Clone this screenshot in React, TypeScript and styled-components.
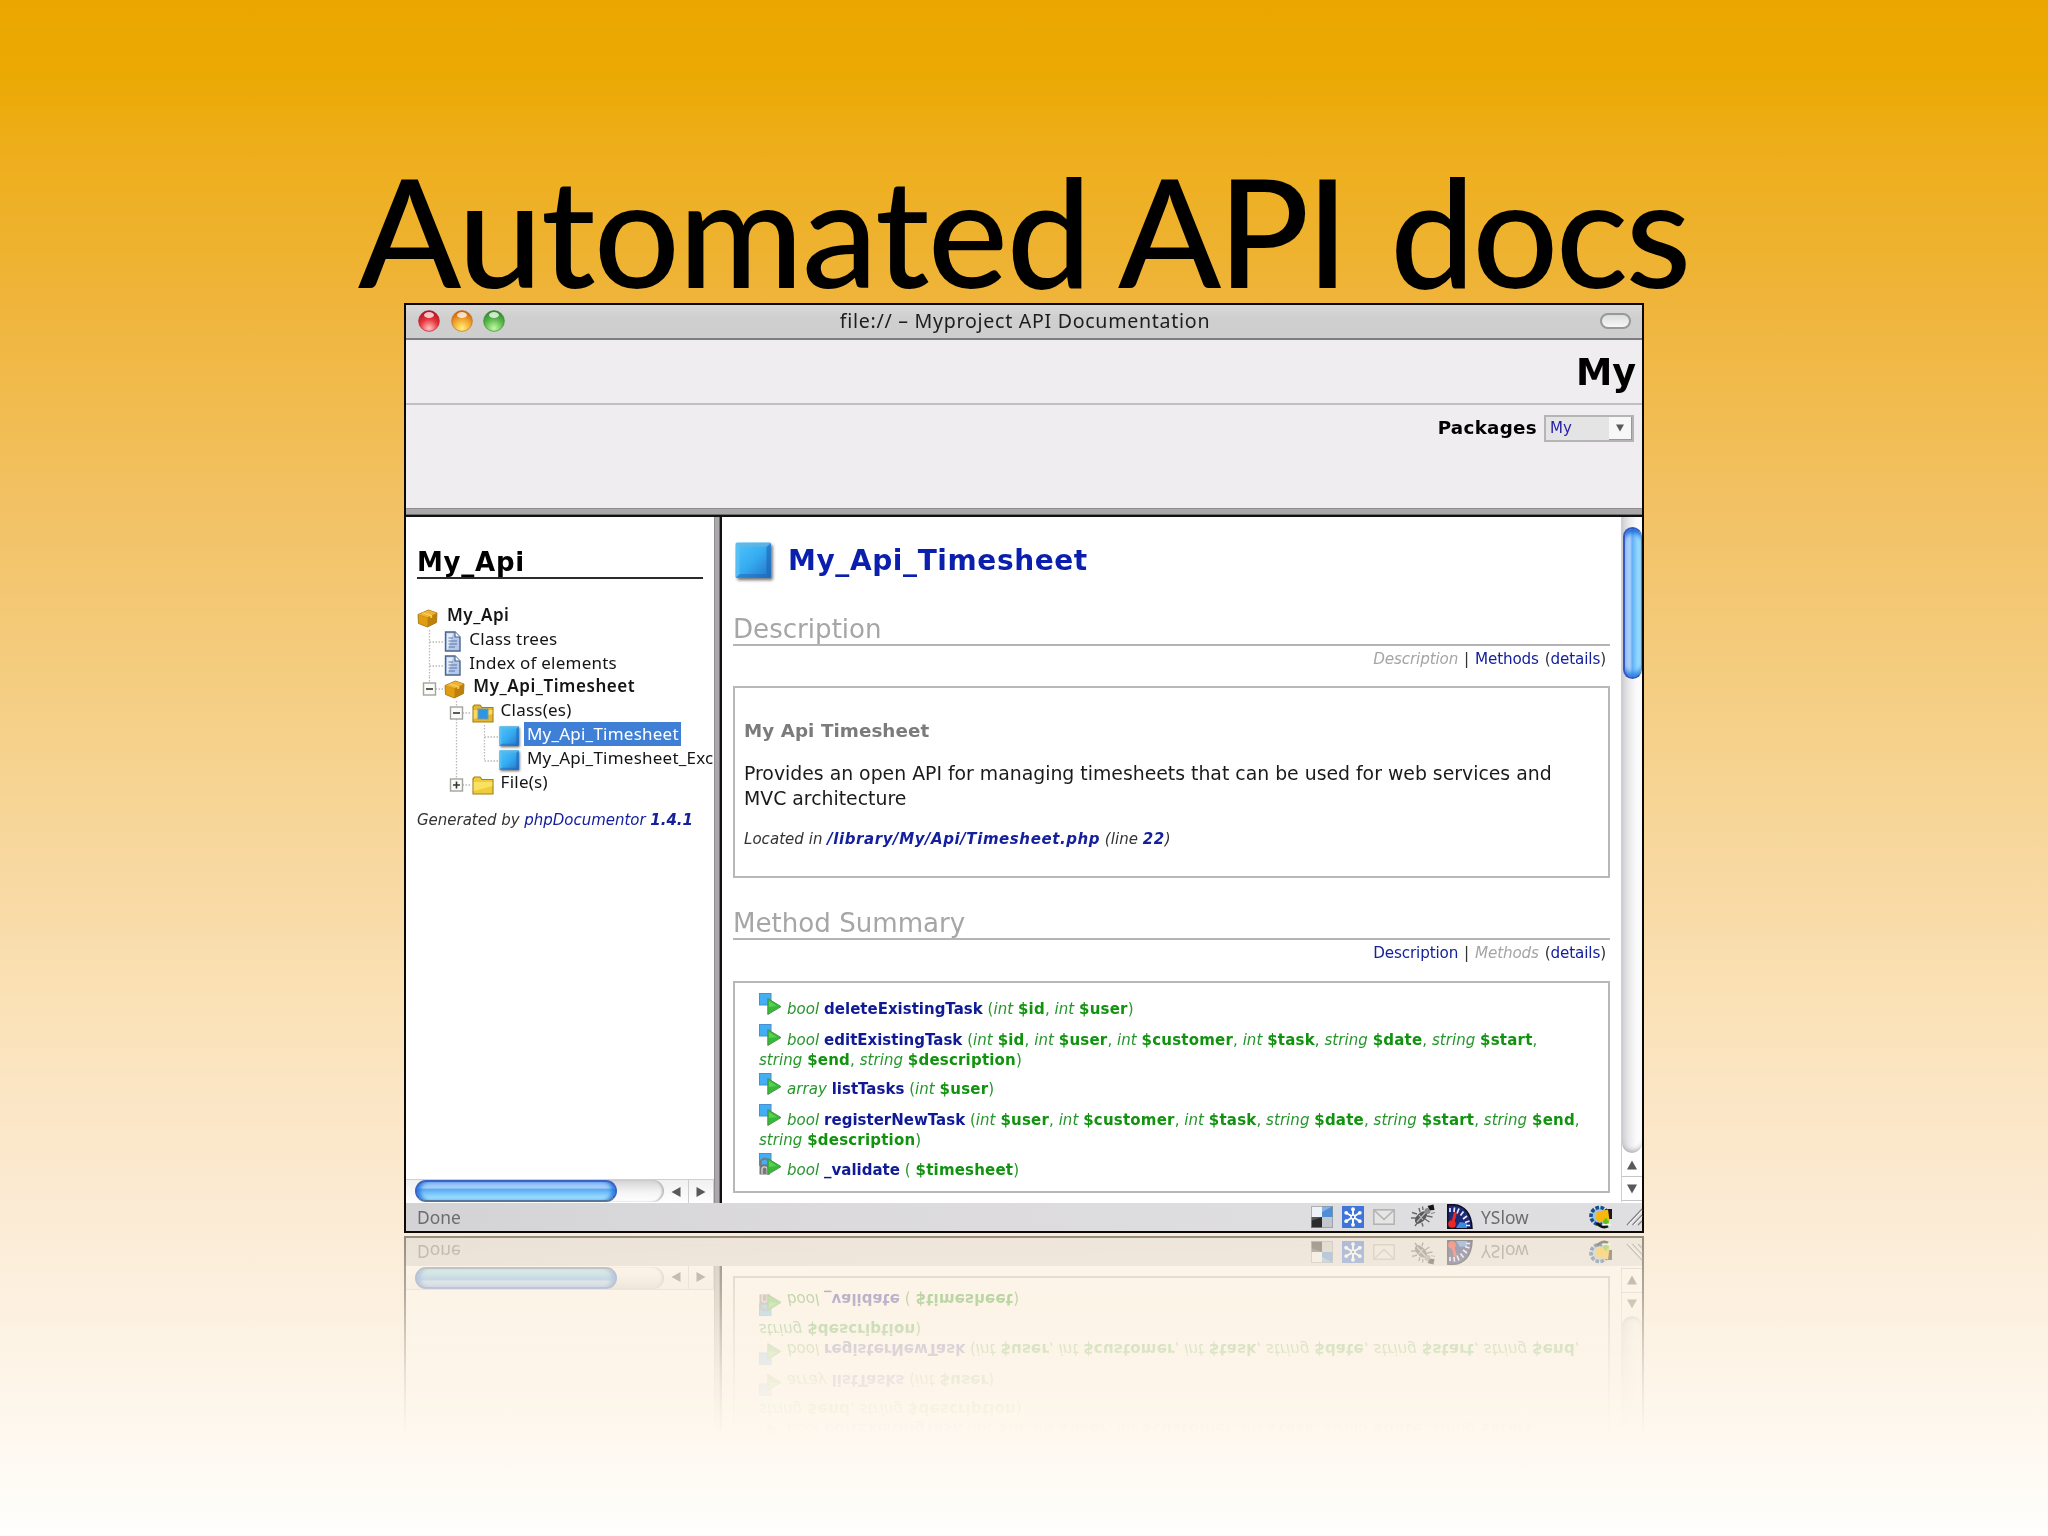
import React from "react";
import styled, { createGlobalStyle } from "styled-components";

const verdana = "'DejaVu Sans', Verdana, sans-serif";
const lucida = "'Noto Sans', 'Lucida Grande', sans-serif";
const gill = "Lato, 'Gill Sans', sans-serif";

const GlobalStyle = createGlobalStyle`
  *, *::before, *::after { box-sizing: border-box; }
  html, body { margin: 0; padding: 0; }
  svg { display: block; flex: none; overflow: visible; }
`;

/* ---------- slide ---------- */

const Slide = styled.main`
  display: flex;
  flex-direction: column;
  width: 2048px;
  height: 1536px;
  overflow: hidden;
  padding: 153px 0 0 358px;
  background: linear-gradient(
    #eba700 0px, #eba903 75px, #eeae1b 150px, #efb43a 300px, #f1bb4e 400px,
    #f2c163 500px, #f4cb7c 650px, #f6d595 800px, #f8daa5 900px, #fae1b6 1000px,
    #fbe7c9 1130px, #fbedd9 1250px, #fdf3e5 1350px, #fef9f1 1450px, #fffefc 1536px
  );
`;

const Title = styled.h1`
  display: grid;
  grid-template-columns: 760px 272px 300px;
  margin: 0;
  height: 150px;
  font: 500 151.5px/153px ${gill};
  color: #000;
`;

const Word = styled.span<{ $tracking: number }>`
  letter-spacing: ${(p) => p.$tracking}px;
  white-space: nowrap;
`;

/* ---------- browser window ---------- */

const Window = styled.section`
  display: flex;
  flex-direction: column;
  flex: none;
  width: 1240px;
  height: 930px;
  margin-left: 46px;
  border: 2px solid #0b0806;
  background: #fff;
  -webkit-box-reflect: below 3px linear-gradient(to top, rgba(0, 0, 0, 0.42), rgba(0, 0, 0, 0.3) 6%, rgba(0, 0, 0, 0.17) 11%, rgba(0, 0, 0, 0.07) 15.5%, transparent 21.5%);
`;

const TitleBar = styled.header`
  display: flex;
  align-items: center;
  flex: none;
  height: 35px;
  padding: 0 11px 0 12px;
  border-bottom: 2px solid #7d7f7e;
  background: linear-gradient(#d9d9d9, #cfcfcf 40%, #cdcecd);
`;

const Lights = styled.div`
  display: flex;
  gap: 10.7px;
  width: 120px;
  margin-top: -1px;
`;

const WindowTitle = styled.div`
  flex: 1;
  height: 33px;
  padding-left: 1px;
  text-align: center;
  font: 400 19.6px/32px ${lucida};
  letter-spacing: 0.71px;
  color: #1d1d1d;
  white-space: nowrap;
`;

const PillSlot = styled.div`
  display: flex;
  justify-content: flex-end;
  width: 120px;
`;

const Pill = styled.div`
  width: 31px;
  height: 16px;
  margin-top: -1px;
  border: 2px solid #979999;
  border-radius: 8px;
  background: linear-gradient(#dcdcdc, #f7f7f7);
`;

const Banner = styled.div`
  flex: none;
  height: 65px;
  padding: 9px 6px 0 0;
  border-bottom: 2px solid #c2c1c2;
  background: #efedef;
  text-align: right;
  font: 700 36.5px/48px ${verdana};
  color: #000;
`;

const PackageBar = styled.div`
  display: flex;
  justify-content: flex-end;
  align-items: flex-start;
  gap: 7px;
  flex: none;
  height: 103px;
  padding: 10px 8px 0 0;
  background: #efedef;
`;

const PackageLabel = styled.label`
  font: 700 18.3px/25px ${verdana};
  letter-spacing: 0.3px;
  color: #000;
`;

const Select = styled.div`
  display: flex;
  justify-content: space-between;
  width: 90px;
  height: 27px;
  border: 2px solid #b5b5b5;
  background: #e4e4e5;
  font: 400 15px/23px ${verdana};
  color: #2a22a8;
  padding-left: 4px;
`;

const SelectArrow = styled.span`
  display: flex;
  align-items: center;
  justify-content: center;
  width: 23px;
  background: #f7f7f7;
  border-right: 1px solid #999;
  border-bottom: 1px solid #999;
`;

const HSplitter = styled.div`
  flex: none;
  height: 9px;
  background: linear-gradient(#8f8d8f 0 1px, #aaa8aa 1px 6px, #6e6d6e 6px 7px, #111 7px);
`;

const Frames = styled.div`
  display: flex;
  flex: none;
  height: 686px;
`;

const VSplitter = styled.div`
  flex: none;
  width: 8px;
  background: linear-gradient(90deg, #8f8d8f 0 1px, #aaa8aa 1px 5px, #6e6d6e 5px 6px, #111 6px);
`;

/* ---------- navigation frame ---------- */

const NavFrame = styled.nav`
  display: flex;
  flex-direction: column;
  flex: none;
  width: 308px;
`;

const NavBody = styled.div`
  flex: 1;
  overflow: hidden;
  padding: 30px 0 0 11px;
`;

const NavHeading = styled.h2`
  width: 286px;
  height: 32px;
  margin: 0 0 27px;
  border-bottom: 2px solid #2b2b2b;
  font: 700 26px/30px ${verdana};
  letter-spacing: 0.75px;
  color: #000;
`;

const TreeRow = styled.div`
  display: flex;
  align-items: flex-start;
  height: 23.8px;
`;

const IconSlot = styled.span<{ $width: number; $top?: number }>`
  flex: none;
  width: ${(p) => p.$width}px;
  padding-top: ${(p) => p.$top ?? 1}px;
`;

const TreeLabel = styled.span<{ $bold?: boolean; $selected?: boolean }>`
  flex: none;
  height: 24px;
  margin-top: -3px;
  padding: 0 2px 0 3px;
  font: ${(p) => (p.$bold ? 600 : 400)} 17px/24px ${lucida};
  letter-spacing: ${(p) => (p.$bold ? 0.55 : 0.23)}px;
  color: ${(p) => (p.$selected ? "#fff" : "#141414")};
  background: ${(p) => (p.$selected ? "#3f7fd6" : "transparent")};
  white-space: nowrap;
`;

const Generated = styled.p`
  margin: 13.5px 0 0;
  font: italic 400 15px/20px ${verdana};
  letter-spacing: -0.02px;
  color: #333;
  white-space: nowrap;
`;

const Link = styled.span<{ $bold?: boolean }>`
  color: #15209c;
  font-weight: ${(p) => (p.$bold ? 700 : "inherit")};
`;

const HScroll = styled.div`
  display: flex;
  align-items: flex-start;
  flex: none;
  height: 24px;
  padding-left: 9px;
  border-top: 1px solid #cfcfcf;
  background: linear-gradient(#f0f0f0, #fff);
`;

const HTrack = styled.div`
  width: 249px;
  height: 22px;
  border-radius: 11px;
  background: linear-gradient(#d3d3d5, #f4f4f5 55%, #fff);
  box-shadow: inset -2px 0 2px #bcbcc0;
`;

const HThumb = styled.div`
  width: 202px;
  height: 22px;
  border: 2px solid #3b62c4;
  border-bottom-color: #55779c;
  border-radius: 11px;
  background: linear-gradient(#8ebcf4, #a5cef8 32%, #5aaaf3 42%, #86cefb 72%, #a9e9fe);
  box-shadow: inset 5px 0 4px -2px #2279e0, inset -5px 0 4px -2px #2279e0;
`;

const HArrow = styled.span`
  display: flex;
  align-items: center;
  justify-content: center;
  width: 25px;
  height: 23px;
  border-right: 1px solid #cdcdcf;
`;

/* ---------- documentation frame ---------- */

const DocFrame = styled.article`
  display: flex;
  flex-direction: column;
  flex: none;
  width: 899px;
  padding: 25px 11px 0;
`;

const ClassHeading = styled.h1`
  display: flex;
  align-items: center;
  gap: 15px;
  height: 38px;
  margin: 0 0 33px;
  padding-left: 2px;
  font: 700 28px/38px ${verdana};
  letter-spacing: 0.6px;
  color: #0a1fae;
`;

const SectionHeading = styled.h2`
  height: 33px;
  margin: 0 0 3px;
  border-bottom: 2px solid #b5b3b7;
  font: 400 26.1px/32px ${verdana};
  color: #a6a6a6;
`;

const SectionNav = styled.div`
  height: 20px;
  padding-right: 4px;
  text-align: right;
  font: 400 15.2px/20px ${verdana};
  letter-spacing: -0.14px;
  word-spacing: 1.2px;
  color: #333;
  white-space: nowrap;
`;

const Current = styled.em`
  color: #a5a5a5;
`;

const Box = styled.div<{ $height: number; $gap: number; $pad: string }>`
  height: ${(p) => p.$height}px;
  margin: ${(p) => p.$gap}px 0 29px;
  padding: ${(p) => p.$pad};
  border: 2px solid #b9b7bb;
  flex: none;
`;

const BoxTitle = styled.h3`
  margin: 0 0 18px;
  font: 700 18.3px/24px ${verdana};
  letter-spacing: 0.08px;
  color: #7b7b7b;
`;

const Paragraph = styled.p`
  width: 830px;
  margin: 0 0 18px;
  font: 400 18.85px/25px ${verdana};
  color: #1a1a1a;
`;

const Location = styled.p`
  margin: 0;
  font: italic 400 15px/20px ${verdana};
  letter-spacing: 0.04px;
  color: #333;
  b { letter-spacing: 0.58px; }
`;

const Method = styled.div<{ $gap: number }>`
  margin-bottom: ${(p) => p.$gap}px;
  font: 400 15px/20px ${verdana};
  letter-spacing: 0.05px;
  color: #25962b;
  b { color: #11930f; letter-spacing: 0.2px; }
`;

const MethodName = styled.strong`
  color: #101a96;
  letter-spacing: 0;
`;

const Line = styled.div`
  display: flex;
  height: 20px;
  white-space: pre;
`;

const MethodIconSlot = styled.span`
  width: 28px;
  margin-top: -6.5px;
`;

const VScroll = styled.div`
  display: flex;
  flex-direction: column;
  flex: none;
  width: 21px;
  height: 685px;
  border-left: 1px solid #cfcfd2;
  background: #fff;
`;

const VTrack = styled.div`
  height: 636px;
  padding: 10px 0 0 1px;
  border-radius: 0 0 10px 10px;
  background: linear-gradient(90deg, #cfcfd3, #e9e9eb 35%, #fafafb 70%, #fff);
  box-shadow: inset 0 -5px 5px -3px #a9a9ac;
`;

const VThumb = styled.div`
  width: 19px;
  height: 152px;
  border: 2px solid #3458bf;
  border-right: 1px solid #5583b0;
  border-radius: 10px;
  background: linear-gradient(90deg, #a3c8f7, #a9cffa 32%, #61aef5 45%, #8dd3fc 75%, #a3e4fd);
  box-shadow: inset 0 7px 5px -3px #1d6ddc, inset 0 -7px 5px -3px #2b80e4;
`;

const VArrow = styled.span`
  display: flex;
  align-items: center;
  justify-content: center;
  height: 24px;
  border-bottom: 1px solid #c6c6c8;
`;

/* ---------- status bar ---------- */

const StatusBar = styled.footer`
  display: flex;
  align-items: center;
  flex: none;
  height: 28px;
  padding: 0 0 1px 11px;
  background: linear-gradient(90deg, #d3d3d5, #dcdadd 35%, #dfdfe1);
  font: 400 17.4px/28px ${lucida};
  color: #6c6c6e;
`;

const StatusText = styled.span<{ $width: number }>`
  width: ${(p) => p.$width}px;
  margin-top: 1px;
`;

const StatusIcon = styled.span<{ $width: number }>`
  width: ${(p) => p.$width}px;
`;

/* ---------- drawings ---------- */

const Light = ({ id, dark, mid, glow }: { id: string; dark: string; mid: string; glow: string }) => (
  <svg width="22" height="22" viewBox="0 0 22 22">
    <defs>
      <radialGradient id={id} cx="0.5" cy="0.85" r="0.8">
        <stop offset="0" stopColor={glow} />
        <stop offset="0.55" stopColor={mid} />
        <stop offset="1" stopColor={dark} />
      </radialGradient>
    </defs>
    <circle cx="11" cy="11" r="10.4" fill={`url(#${id})`} stroke={dark} strokeOpacity="0.6" />
    <ellipse cx="11" cy="5" rx="5" ry="3" fill="#fff" fillOpacity="0.75" />
  </svg>
);

const Triangle = ({ dir, size = 10 }: { dir: "up" | "down" | "left" | "right"; size?: number }) => {
  const d = {
    up: "M5 0.5L10 9.5H0Z",
    down: "M5 9.5L0 0.5H10Z",
    left: "M0.5 5L9.5 0V10Z",
    right: "M9.5 5L0.5 0V10Z",
  }[dir];
  return (
    <svg width={size} height={size} viewBox="0 0 10 10">
      <path d={d} fill="#59595b" />
    </svg>
  );
};

const PackageIcon = () => (
  <svg width="21" height="19" viewBox="0 0 21 19">
    <path d="M1 5.5L11.5 1L20 4L19.5 13.5L10.5 18L1.5 14.5Z" fill="#d08c0c" stroke="#9a690c" strokeWidth="0.8" strokeLinejoin="round" />
    <path d="M1.5 5.5L11.5 1.3L19.6 4L10.5 8.3Z" fill="#efb32f" />
    <path d="M1.6 6L10.4 8.7V17.4L2 14.2Z" fill="#e09d12" />
    <path d="M10.9 8.7L19.4 4.6L19 13.2L10.9 17.3Z" fill="#bd800c" />
    <path d="M6.5 3.4L15.2 6.2V8.4L13.4 9.2V7.2L5 4.2Z" fill="#f9cf60" />
  </svg>
);

const PageIcon = () => (
  <svg width="18" height="21" viewBox="0 0 18 21">
    <path d="M1.5 1H11L16 6V20H1.5Z" fill="#b4c9ea" stroke="#4c648f" strokeWidth="1.4" />
    <path d="M3 2.5H9L4 18.5H3Z" fill="#e3edfa" />
    <path d="M11 1V6H16" fill="#f4f8ff" stroke="#4c648f" strokeWidth="1.2" />
    <path d="M4.5 7H9M4.5 10H13M4.5 13H13M4.5 16H11" stroke="#5c78a8" strokeWidth="1.2" />
  </svg>
);

const FolderIcon = ({ classes = false }: { classes?: boolean }) => (
  <svg width="22" height="19" viewBox="0 0 22 19">
    <path d="M1 18V2.5L2.5 1H8L10 3.5H21V18Z" fill={classes ? "#e6b72c" : "#f0cd38"} stroke="#a37f16" strokeWidth="1.1" />
    <path d="M1.6 6H20.4V10L1.6 15Z" fill="#fbe772" fillOpacity="0.75" />
    {classes && <rect x="6" y="5" width="10" height="10" fill="#2f94e2" stroke="#7d97a0" />}
  </svg>
);

const ClassIcon = ({ size, id }: { size: number; id: string }) => (
  <svg width={size} height={size} viewBox="0 0 38 38">
    <defs>
      <linearGradient id={id} x1="0" y1="0" x2="1" y2="1">
        <stop offset="0" stopColor="#4fc6fb" />
        <stop offset="0.5" stopColor="#35acf2" />
        <stop offset="1" stopColor="#2471c6" />
      </linearGradient>
      <filter id={`${id}-shadow`} x="-20%" y="-20%" width="150%" height="150%">
        <feDropShadow dx="1.8" dy="2.2" stdDeviation="1.6" floodColor="#555" floodOpacity="0.8" />
      </filter>
    </defs>
    <rect x="0.5" y="0.5" width="35.5" height="35.5" rx="1.5" fill={`url(#${id})`} filter={`url(#${id}-shadow)`} />
    <path d="M1 1H35.5L32 4.5H4.5Z" fill="#6fb4d8" fillOpacity="0.7" />
    <path d="M1 1L4.5 4.5V32L1 35.5Z" fill="#5cc0f4" fillOpacity="0.8" />
    <path d="M35.8 1.5V35.8L31.5 32V5Z" fill="#1f62b4" fillOpacity="0.6" />
    <path d="M1 35.8H35.5L31.5 32H5Z" fill="#1c64b8" fillOpacity="0.5" />
  </svg>
);

type Branch = "blank" | "line" | "tee" | "corner" | "minus" | "minusEnd" | "plusEnd";

const TreeCell = ({ kind }: { kind: Branch }) => {
  const toggle = kind === "minus" || kind === "minusEnd" || kind === "plusEnd";
  const half = kind === "corner" || kind === "minusEnd" || kind === "plusEnd";
  return (
    <svg width="27.3" height="24" viewBox="0 0 27.3 24">
      {kind !== "blank" && (
        <g stroke="#b9b9b9" strokeWidth="1.3" strokeDasharray="1.5 1.5">
          <path d={half ? "M12.5 0V12" : "M12.5 0V24"} />
          {kind !== "line" && <path d="M12.5 12H27" />}
        </g>
      )}
      {toggle && (
        <g>
          <rect x="6.5" y="6" width="12" height="12" fill="#fbfbf8" stroke="#a3a39e" strokeWidth="1.4" />
          <path d={kind === "plusEnd" ? "M9 12H16M12.5 8.5V15.5" : "M9 12H16"} stroke="#333" strokeWidth="1.6" />
        </g>
      )}
    </svg>
  );
};

const MethodIcon = ({ locked = false }: { locked?: boolean }) => (
  <svg width="23" height="22" viewBox="0 0 23 22">
    <rect x="0.5" y="0.5" width="11.5" height="11.5" fill="#42aef4" stroke="#4a8fd0" />
    {locked && (
      <g>
        <path d="M1.5 13V10A4 4 0 0 1 9.8 10V13" fill="none" stroke="#77787c" strokeWidth="2" />
        <rect x="0.5" y="11.5" width="10.5" height="10" fill="#77787a" />
        <path d="M3 21V16.5A2.6 2.6 0 0 1 8.2 16.5V21" fill="none" stroke="#cfcfcf" strokeWidth="1.4" />
      </g>
    )}
    <path d="M8.8 5.5L22 13.6L8.8 21.5Z" fill="#35bb33" stroke="#4c8f55" strokeWidth="1" strokeLinejoin="round" />
    <path d="M10 8L18 13L10 14Z" fill="#6ed95c" fillOpacity="0.7" />
  </svg>
);

const Delicious = () => (
  <svg width="22" height="22" viewBox="0 0 22 22">
    <rect width="11" height="11" fill="#eef1f5" />
    <rect x="11" width="11" height="11" fill="#4f8ed6" />
    <path d="M11 0H22L11 6Z" fill="#86b4e6" />
    <rect y="11" width="11" height="11" fill="#2b2b2b" />
    <path d="M0 11H11L0 15Z" fill="#555" />
    <rect x="11" y="11" width="11" height="11" fill="#c3c6ca" />
    <rect x="0.5" y="0.5" width="21" height="21" fill="none" stroke="#8c949e" strokeOpacity="0.7" />
  </svg>
);

const Snowflake = () => (
  <svg width="22" height="22" viewBox="0 0 22 22">
    <rect width="22" height="22" fill="#3f75d8" />
    <g stroke="#fff" strokeWidth="2" strokeLinecap="round">
      <path d="M11 3.5V18.5M4.5 7L17.5 15M17.5 7L4.5 15" />
    </g>
    <g fill="#fff">
      <circle cx="11" cy="3.2" r="1.9" /><circle cx="11" cy="18.8" r="1.9" />
      <circle cx="4.2" cy="6.8" r="1.9" /><circle cx="17.8" cy="6.8" r="1.9" />
      <circle cx="4.2" cy="15.2" r="1.9" /><circle cx="17.8" cy="15.2" r="1.9" />
    </g>
    <circle cx="11" cy="11" r="2" fill="#3f75d8" stroke="#fff" strokeWidth="1.4" />
  </svg>
);

const Mail = () => (
  <svg width="22" height="16" viewBox="0 0 22 16">
    <rect x="0.8" y="0.8" width="20.4" height="14.4" fill="#e6e5e5" stroke="#b3b1ae" strokeWidth="1.5" />
    <path d="M1.5 1.5L11 10.5L20.5 1.5" fill="none" stroke="#b3b1ae" strokeWidth="1.5" />
  </svg>
);

const Bug = () => (
  <svg width="26" height="25" viewBox="0 0 26 25">
    <g stroke="#6b6b6b" strokeWidth="1.4" fill="none">
      <path d="M7 10L2 8.5M6.5 14H1M8 18L5 22M12 19L13 22.5M15 15L19.5 18M17 12L22.5 13M10 8L9 4M13 6L12.5 2.5" />
    </g>
    <ellipse cx="11" cy="13.5" rx="7.6" ry="4.2" transform="rotate(-45 11 13.5)" fill="#5a5a5a" />
    <path d="M7 18L16 8M9 11L13 16" stroke="#bdbdbd" strokeWidth="1.2" />
    <circle cx="17.5" cy="7" r="3" fill="#8c8c8c" />
    <path d="M17.5 2L23.5 0.5L24.5 6L20 6.3Z" fill="#151515" />
    <path d="M21 9.5L25 8.5" stroke="#888" strokeWidth="1.2" />
  </svg>
);

const Speedometer = () => (
  <svg width="26" height="25" viewBox="0 0 26 25">
    <path d="M0.8 0.8H7C17 1.5 24.5 9 25 24.2H0.8Z" fill="#1d2a78" stroke="#0c0c1e" strokeWidth="1.5" />
    <path d="M9 24L13 18L20 19V24Z" fill="#3f8ada" />
    <path d="M3 4V8M7.5 3.5L7 8M12 4.5L10 9.5M16.5 7.5L13.5 11.5M20 12L16 15M22.5 17L18 18.5M23 21.5H19" stroke="#e9ecf8" strokeWidth="1.7" />
    <path d="M8.5 8.5L6.2 17" stroke="#ea2a22" strokeWidth="3" />
    <circle cx="5" cy="20" r="3.8" fill="#ea2a22" />
  </svg>
);

const Globe = () => (
  <svg width="24" height="24" viewBox="0 0 24 24">
    <circle cx="10.5" cy="11" r="8.5" fill="#9fc3e8" stroke="#174f8d" strokeWidth="3.6" strokeDasharray="3.6 1.5" />
    <path d="M8 18A8.5 8.5 0 0 0 19 21" stroke="#111" strokeWidth="3" fill="none" />
    <rect x="16.5" y="4" width="6.5" height="10" fill="#1a1a1a" />
    <path d="M7.5 7L19 4.5L20.5 15.5L10 17.5L7 14Z" fill="#fbb80c" />
    <path d="M16.5 14.5L23 20.5H12.5Z" fill="#f0f4ea" />
    <path d="M16.8 13.5V19M14 17H19.8" stroke="#57c411" strokeWidth="2.8" />
  </svg>
);

const Grip = () => (
  <svg width="15" height="17" viewBox="0 0 15 17">
    <path d="M0 17L15 1M5.5 17L15 7M11 17L15 13" stroke="#808083" strokeWidth="1.2" />
    <path d="M1.6 17L15 2.8M7 17L15 8.7" stroke="#fff" strokeWidth="1" />
  </svg>
);

/* ---------- content ---------- */

type Param = [type: string, name: string];
interface MethodInfo {
  returns: string;
  name: string;
  lines: Param[][];
  locked?: boolean;
}

const methods: MethodInfo[] = [
  { returns: "bool", name: "deleteExistingTask", lines: [[["int", "$id"], ["int", "$user"]]] },
  {
    returns: "bool",
    name: "editExistingTask",
    lines: [
      [["int", "$id"], ["int", "$user"], ["int", "$customer"], ["int", "$task"], ["string", "$date"], ["string", "$start"]],
      [["string", "$end"], ["string", "$description"]],
    ],
  },
  { returns: "array", name: "listTasks", lines: [[["int", "$user"]]] },
  {
    returns: "bool",
    name: "registerNewTask",
    lines: [
      [["int", "$user"], ["int", "$customer"], ["int", "$task"], ["string", "$date"], ["string", "$start"], ["string", "$end"]],
      [["string", "$description"]],
    ],
  },
  { returns: "bool", name: "_validate", lines: [[["", "$timesheet"]]], locked: true },
];

const MethodEntry = ({ info, gap }: { info: MethodInfo; gap: number }) => (
  <Method $gap={gap}>
    {info.lines.map((params, i) => {
      const lastLine = i === info.lines.length - 1;
      return (
        <Line key={i}>
          {i === 0 && (
            <MethodIconSlot>
              <MethodIcon locked={info.locked} />
            </MethodIconSlot>
          )}
          <span>
            {i === 0 && (
              <>
                <em>{info.returns}</em> <MethodName>{info.name}</MethodName> (
              </>
            )}
            {params.map(([type, name], j) => (
              <React.Fragment key={j}>
                <em>{type}</em> <b>{name}</b>
                {j < params.length - 1 ? ", " : lastLine ? ")" : ","}
              </React.Fragment>
            ))}
          </span>
        </Line>
      );
    })}
  </Method>
);

export default function App() {
  return (
    <>
      <GlobalStyle />
      <Slide>
        <Title>
          <Word $tracking={-1.6}>Automated</Word>
          <Word $tracking={-3.4}>API</Word>
          <Word $tracking={-2.8}>docs</Word>
        </Title>
        <Window>
          <TitleBar>
            <Lights>
              <Light id="close" dark="#b5121f" mid="#e8353c" glow="#ffc4c4" />
              <Light id="minimise" dark="#c8640c" mid="#f2a52c" glow="#fff27e" />
              <Light id="zoom" dark="#2f8a2b" mid="#5cba4e" glow="#c9f7a6" />
            </Lights>
            <WindowTitle>file:// – Myproject API Documentation</WindowTitle>
            <PillSlot>
              <Pill />
            </PillSlot>
          </TitleBar>
          <Banner>My</Banner>
          <PackageBar>
            <PackageLabel>Packages</PackageLabel>
            <Select>
              My
              <SelectArrow>
                <Triangle dir="down" size={8} />
              </SelectArrow>
            </Select>
          </PackageBar>
          <HSplitter />
          <Frames>
            <NavFrame>
              <NavBody>
                <NavHeading>My_Api</NavHeading>
                <TreeRow>
                  <IconSlot $width={27} $top={3}><PackageIcon /></IconSlot>
                  <TreeLabel $bold>My_Api</TreeLabel>
                </TreeRow>
                <TreeRow>
                  <TreeCell kind="tee" />
                  <IconSlot $width={22}><PageIcon /></IconSlot>
                  <TreeLabel>Class trees</TreeLabel>
                </TreeRow>
                <TreeRow>
                  <TreeCell kind="tee" />
                  <IconSlot $width={22}><PageIcon /></IconSlot>
                  <TreeLabel>Index of elements</TreeLabel>
                </TreeRow>
                <TreeRow>
                  <TreeCell kind="minusEnd" />
                  <IconSlot $width={26} $top={3}><PackageIcon /></IconSlot>
                  <TreeLabel $bold>My_Api_Timesheet</TreeLabel>
                </TreeRow>
                <TreeRow>
                  <TreeCell kind="blank" />
                  <TreeCell kind="minus" />
                  <IconSlot $width={26} $top={3}><FolderIcon classes /></IconSlot>
                  <TreeLabel>Class(es)</TreeLabel>
                </TreeRow>
                <TreeRow>
                  <TreeCell kind="blank" />
                  <TreeCell kind="line" />
                  <TreeCell kind="tee" />
                  <IconSlot $width={25}><ClassIcon size={21} id="cls-a" /></IconSlot>
                  <TreeLabel $selected>My_Api_Timesheet</TreeLabel>
                </TreeRow>
                <TreeRow>
                  <TreeCell kind="blank" />
                  <TreeCell kind="line" />
                  <TreeCell kind="corner" />
                  <IconSlot $width={25}><ClassIcon size={21} id="cls-b" /></IconSlot>
                  <TreeLabel>My_Api_Timesheet_Exc</TreeLabel>
                </TreeRow>
                <TreeRow>
                  <TreeCell kind="blank" />
                  <TreeCell kind="plusEnd" />
                  <IconSlot $width={26} $top={3}><FolderIcon /></IconSlot>
                  <TreeLabel>File(s)</TreeLabel>
                </TreeRow>
                <Generated>
                  Generated by <Link>phpDocumentor <Link $bold>1.4.1</Link></Link>
                </Generated>
              </NavBody>
              <HScroll>
                <HTrack>
                  <HThumb />
                </HTrack>
                <HArrow><Triangle dir="left" /></HArrow>
                <HArrow><Triangle dir="right" /></HArrow>
              </HScroll>
            </NavFrame>
            <VSplitter />
            <DocFrame>
              <ClassHeading>
                <ClassIcon size={38} id="cls-big" />
                My_Api_Timesheet
              </ClassHeading>
              <SectionHeading>Description</SectionHeading>
              <SectionNav>
                <Current>Description</Current> | <Link>Methods</Link> (<Link>details</Link>)
              </SectionNav>
              <Box $height={192} $gap={17} $pad="31px 0 0 9px">
                <BoxTitle>My Api Timesheet</BoxTitle>
                <Paragraph>
                  Provides an open API for managing timesheets that can be used for web services and MVC architecture
                </Paragraph>
                <Location>
                  Located in <Link as="b" $bold>/library/My/Api/Timesheet.php</Link> (line <Link as="b" $bold>22</Link>)
                </Location>
              </Box>
              <SectionHeading>Method Summary</SectionHeading>
              <SectionNav>
                <Link>Description</Link> | <Current>Methods</Current> (<Link>details</Link>)
              </SectionNav>
              <Box $height={212} $gap={18} $pad="16px 0 0 24px">
                {methods.map((info, i) => (
                  <MethodEntry key={info.name} info={info} gap={i % 2 === 0 ? 11 : 9.4} />
                ))}
              </Box>
            </DocFrame>
            <VScroll>
              <VTrack>
                <VThumb />
              </VTrack>
              <VArrow><Triangle dir="up" /></VArrow>
              <VArrow><Triangle dir="down" /></VArrow>
            </VScroll>
          </Frames>
          <StatusBar>
            <StatusText $width={894}>Done</StatusText>
            <StatusIcon $width={31}><Delicious /></StatusIcon>
            <StatusIcon $width={31}><Snowflake /></StatusIcon>
            <StatusIcon $width={37}><Mail /></StatusIcon>
            <StatusIcon $width={37}><Bug /></StatusIcon>
            <StatusIcon $width={34}><Speedometer /></StatusIcon>
            <StatusText $width={108}>YSlow</StatusText>
            <StatusIcon $width={38}><Globe /></StatusIcon>
            <Grip />
          </StatusBar>
        </Window>
      </Slide>
    </>
  );
}
